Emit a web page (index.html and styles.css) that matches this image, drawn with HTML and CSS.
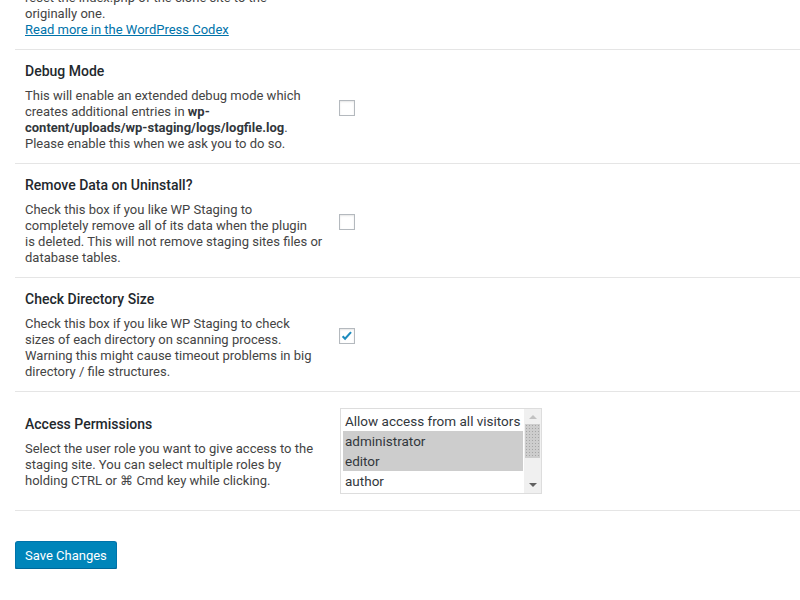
FILE: index.html
```html
<!DOCTYPE html>
<html lang="en">
<head>
    <meta charset="UTF-8">
    <meta name="viewport" content="width=device-width, initial-scale=1.0">
    <title>WP Staging Settings</title>
    <link rel="stylesheet" href="styles.css">
</head>
<body>
    <form class="wrap" onsubmit="return false">
        <table class="form-table">
            <tr class="row-first">
                <td class="label">
                    <p class="description">
                        reset the index.php of the clone site to the<br>
                        originally one.<br>
                        <a href="#">Read more in the WordPress Codex</a>
                    </p>
                </td>
                <td class="field"></td>
            </tr>
            <tr>
                <td class="label">
                    <div class="title">Debug Mode</div>
                    <p class="description">
                        This will enable an extended debug mode which<br>
                        creates additional entries in <b>wp-<br>
                        content/uploads/wp-staging/logs/logfile.log</b>.<br>
                        Please enable this when we ask you to do so.
                    </p>
                </td>
                <td class="field"><input type="checkbox" class="check"></td>
            </tr>
            <tr>
                <td class="label">
                    <div class="title">Remove Data on Uninstall?</div>
                    <p class="description">
                        Check this box if you like WP Staging to<br>
                        completely remove all of its data when the plugin<br>
                        is deleted. This will not remove staging sites files or<br>
                        database tables.
                    </p>
                </td>
                <td class="field"><input type="checkbox" class="check"></td>
            </tr>
            <tr>
                <td class="label">
                    <div class="title">Check Directory Size</div>
                    <p class="description">
                        Check this box if you like WP Staging to check<br>
                        sizes of each directory on scanning process.<br>
                        Warning this might cause timeout problems in big<br>
                        directory / file structures.
                    </p>
                </td>
                <td class="field"><input type="checkbox" class="check" checked></td>
            </tr>
            <tr class="row-select">
                <td class="label">
                    <div class="title">Access Permissions</div>
                    <p class="description">
                        Select the user role you want to give access to the<br>
                        staging site. You can select multiple roles by<br>
                        holding CTRL or &#8984; Cmd key while clicking.
                    </p>
                </td>
                <td class="field">
                    <div class="listbox">
                        <div class="options">
                            <div class="option">Allow access from all visitors</div>
                            <div class="option selected">administrator</div>
                            <div class="option selected">editor</div>
                            <div class="option">author</div>
                        </div>
                        <div class="scrollbar">
                            <span class="arrow up"></span>
                            <span class="thumb"></span>
                            <span class="arrow down"></span>
                        </div>
                    </div>
                </td>
            </tr>
        </table>
        <p class="submit">
            <button type="submit" class="button-primary">Save Changes</button>
        </p>
    </form>
</body>
</html>
```
FILE: styles.css
```css
body {
    margin: 0;
    background-color: #fff;
    color: #444;
    font-family: Roboto, "Liberation Sans", sans-serif;
    font-size: 13px;
    overflow: hidden;
}
.wrap {
    padding-left: 15px;
}
.form-table {
    width: 100%;
    border-collapse: collapse;
    margin-top: -21px;
}
.form-table tr {
    border-bottom: 1px solid #e5e5e5;
}
.form-table td {
    vertical-align: middle;
    padding: 11px 0;
}
.label {
    width: 300px;
    padding-left: 10px !important;
}
.field {
    padding-left: 14px !important;
}
.row-select .field {
    padding-top: 16px;
    padding-bottom: 16px;
}
.title {
    font-size: 14px;
    font-weight: 500;
    line-height: 20px;
    color: #23282d;
    margin-bottom: 7px;
}
.description {
    margin: 0;
    line-height: 16px;
    white-space: nowrap;
}
.description b {
    color: #32373c;
}
a {
    color: #0073aa;
}
.check {
    -webkit-appearance: none;
    appearance: none;
    display: block;
    width: 16px;
    height: 16px;
    margin: 3px 0 0;
    border: 1px solid #b4b9be;
    background: #fff;
    box-shadow: inset 0 1px 2px rgba(0, 0, 0, .1);
}
.check:checked {
    background: #fff url("data:image/svg+xml,%3Csvg xmlns='http://www.w3.org/2000/svg' viewBox='0 0 16 16'%3E%3Cpath d='M3 8.2l2.8 2.9L12.6 3.6' fill='none' stroke='%231e8cbe' stroke-width='2.4'/%3E%3C/svg%3E") center / 14px no-repeat;
}
.listbox {
    display: flex;
    width: 200px;
    height: 84px;
    margin-left: 1px;
    border: 1px solid #ddd;
    background: #fff;
    color: #32373c;
    font-size: 13.5px;
}
.options {
    flex: 1;
    padding: 2px 1px 0 2px;
    overflow: hidden;
}
.option {
    height: 20px;
    line-height: 20px;
    padding-left: 2px;
    white-space: nowrap;
}
.option.selected {
    background-color: #cdcdcd;
}
.scrollbar {
    width: 17px;
    background: #f0f0f0;
    display: flex;
    flex-direction: column;
    align-items: center;
}
.arrow {
    width: 0;
    height: 0;
    border-left: 4px solid transparent;
    border-right: 4px solid transparent;
}
.arrow.up {
    margin-top: 6px;
    border-bottom: 4px solid #c2c2c2;
}
.arrow.down {
    margin-top: auto;
    margin-bottom: 6px;
    border-top: 4px solid #606060;
}
.thumb {
    width: 15px;
    height: 34px;
    margin-top: 5px;
    background: #cdcdcd;
    background-image: radial-gradient(#a6a6a6 0.6px, transparent 0.7px);
    background-size: 3px 3px;
}
.submit {
    margin: 30px 0 0;
}
.button-primary {
    height: 28px;
    padding: 0 9px;
    font-family: Roboto, "Liberation Sans", sans-serif;
    font-size: 13px;
    line-height: 27px;
    color: #fff;
    background: #0085ba;
    border: 1px solid #0073aa;
    border-bottom-color: #006799;
    border-radius: 3px;
    box-shadow: 0 1px 0 #006799;
    cursor: pointer;
}
```
